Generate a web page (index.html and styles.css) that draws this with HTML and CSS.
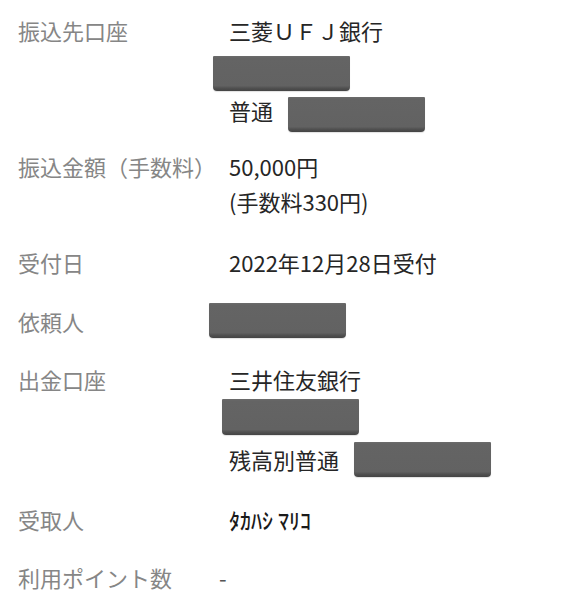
FILE: index.html
```html
<!DOCTYPE html>
<html lang="ja">
<head>
<meta charset="utf-8">
<link rel="stylesheet" href="styles.css">
</head>
<body>
<div class="list">
  <div class="row r1">
    <div class="label">振込先口座</div>
    <div class="value">
      <div class="line">三菱ＵＦＪ銀行</div>
      <div class="mask m1"></div>
      <div class="inline">
        <span class="line shift">普通</span>
        <span class="mask m2"></span>
      </div>
    </div>
  </div>
  <div class="row r2">
    <div class="label">振込金額（手数料）</div>
    <div class="value">
      <div class="line">50,000円</div>
      <div class="line second">(手数料330円)</div>
    </div>
  </div>
  <div class="row r3">
    <div class="label">受付日</div>
    <div class="value"><div class="line">2022年12月28日受付</div></div>
  </div>
  <div class="row r4 center">
    <div class="label">依頼人</div>
    <div class="value"><div class="mask m3"></div></div>
  </div>
  <div class="row r5">
    <div class="label">出金口座</div>
    <div class="value">
      <div class="line">三井住友銀行</div>
      <div class="mask m4"></div>
      <div class="inline">
        <span class="line shift2">残高別普通</span>
        <span class="mask m5"></span>
      </div>
    </div>
  </div>
  <div class="row r6">
    <div class="label">受取人</div>
    <div class="value"><div class="line kana">ﾀｶﾊｼ ﾏﾘｺ</div></div>
  </div>
  <div class="row r7">
    <div class="label">利用ポイント数</div>
    <div class="value"><div class="line dash">-</div></div>
  </div>
</div>
</body>
</html>
```

FILE: styles.css
```css
html, body {
  margin: 0;
  padding: 0;
  background: #ffffff;
}
body {
  font-family: "Noto Sans CJK JP", "Noto Sans", sans-serif;
  font-size: 22px;
}
.list {
  padding: 15px 0 0 18px;
}
.row {
  display: grid;
  grid-template-columns: 211px 1fr;
  align-items: start;
}
.row.center {
  align-items: center;
}
.label {
  color: #868686;
  line-height: 30px;
  white-space: nowrap;
}
.value {
  color: #262626;
}
.line {
  display: block;
  line-height: 30px;
  white-space: nowrap;
}
.second {
  margin-top: 5px;
}
.inline {
  display: flex;
  align-items: flex-start;
  gap: 15px;
}
.shift {
  margin-top: -2px;
}
.shift2 {
  margin-top: 2px;
}
.mask {
  display: block;
  width: 137px;
  height: 35px;
  box-sizing: border-box;
  background: linear-gradient(#6c6c6c 0, #646464 2px, #626262 85%, #505050 92%, #444444 100%);
  border-radius: 1px 1px 4px 4px;
  box-shadow: 0 1px 1px rgba(0, 0, 0, 0.12);
}
.m1 { margin: 11px 0 0 -16px; }
.m3 { margin-left: -20px; }
.m4 { margin: 5px 0 0 -7px; height: 36px; }
.r1 .inline { margin-top: 6px; }
.r5 .inline { margin-top: 7px; }
.r2 { margin-top: 19px; }
.r3 { margin-top: 31px; }
.r4 { margin-top: 26px; }
.r5 { margin-top: 26px; }
.r6 { margin-top: 27px; }
.r7 { margin-top: 28px; }
.kana {
  color: #1a1a1a;
  font-weight: 500;
}
.dash {
  margin-left: -10px;
  color: #555555;
}
```
